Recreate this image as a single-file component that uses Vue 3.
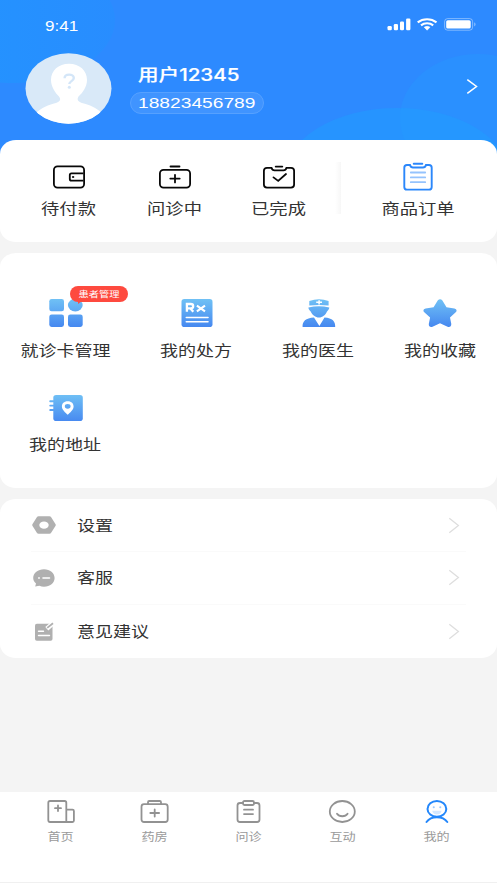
<script setup>
const orders = [
  { icon: 'wallet', label: '待付款' },
  { icon: 'kit', label: '问诊中' },
  { icon: 'done', label: '已完成' },
]
const services = [
  { icon: 'grid', label: '就诊卡管理', badge: '患者管理' },
  { icon: 'rx', label: '我的处方' },
  { icon: 'doctor', label: '我的医生' },
  { icon: 'star', label: '我的收藏' },
  { icon: 'address', label: '我的地址' },
]
const settings = [
  { icon: 'nut', label: '设置' },
  { icon: 'chat', label: '客服' },
  { icon: 'note', label: '意见建议' },
]
const tabs = [
  { icon: 'home', label: '首页' },
  { icon: 'pharmacy', label: '药房' },
  { icon: 'consult', label: '问诊' },
  { icon: 'smile', label: '互动' },
  { icon: 'me', label: '我的' },
]
</script>

<template>
  <div class="page">
    <svg class="defs" width="0" height="0">
      <defs>
        <linearGradient id="blue" gradientUnits="userSpaceOnUse" x1="0" y1="0" x2="0" y2="28">
          <stop offset="0" stop-color="#70c1f5" />
          <stop offset="1" stop-color="#4688f0" />
        </linearGradient>
        <linearGradient id="glow" x1="0" y1="0" x2="1" y2="0">
          <stop offset="0" stop-color="#2295ff" />
          <stop offset="1" stop-color="#288dff" />
        </linearGradient>
      </defs>
    </svg>

    <header class="header">
      <svg class="bubbles" width="497" height="160" viewBox="0 0 497 160">
        <ellipse cx="14" cy="20" rx="101" ry="63" fill="url(#glow)" />
        <ellipse cx="478" cy="118" rx="78" ry="64" fill="#2a90ff" />
        <ellipse cx="397" cy="178" rx="113" ry="70" fill="#1fa0ff" fill-opacity=".45" />
      </svg>
      <div class="status">
        <span class="time">9:41</span>
        <svg class="signals" width="90" height="14" viewBox="0 0 90 14">
          <g fill="#fff">
            <rect x=".5" y="8" width="4.3" height="4.3" rx="1.2" />
            <rect x="6.8" y="6" width="4.2" height="6.3" rx="1.2" />
            <rect x="13" y="3.4" width="4" height="8.9" rx="1.2" />
            <rect x="19.1" y=".6" width="4.3" height="11.7" rx="1.2" />
            <path d="M37.2 9.2Q40.1 7.4 43 9.2L40.1 12.2Z" stroke="#fff" stroke-width=".6" stroke-linejoin="round" />
          </g>
          <g fill="none" stroke="#fff" stroke-width="2.1">
            <path d="M30.7 4.4C36 .1 44.2 .1 49.5 4.4" />
            <path d="M34 7.4C37.3 4.6 42.9 4.6 46.2 7.4" />
          </g>
          <rect x="57.6" y=".6" width="28" height="11.6" rx="3" fill="none" stroke="#fff" stroke-opacity=".4" />
          <rect x="59.2" y="2.2" width="24.5" height="8.4" rx="1.6" fill="#fff" />
          <path d="M87.2 4.3q2.8 2.1 0 4.2z" fill="#fff" fill-opacity=".45" />
        </svg>
      </div>
      <div class="profile">
        <svg class="avatar" width="87" height="71" viewBox="0 0 87 71">
          <clipPath id="round"><ellipse cx="43.5" cy="35.5" rx="43" ry="35.3" /></clipPath>
          <g clip-path="url(#round)">
            <rect width="87" height="71" fill="#d9e9f8" />
            <path d="M44 10.7C33.500 10.700 26 17.500 26 27C26 34 30.500 40 34 43.500C36.500 47 35 49 29 50.500C20 53 14.500 56 9 62V71H79V62C73 56 68 53 59 50.500C53 49 51.500 47 53.500 43.500C57.500 40 62 34 62 27C62 17.500 54.500 10.700 44 10.700Z" fill="#fff" />
          </g>
          <path d="M39.600 25.200C39.600 20.400 48.800 20.600 48.800 25C48.800 28 44.300 28.200 44.300 31" fill="none" stroke="#d4e6f8" stroke-width="2.400" />
          <circle cx="44.300" cy="34.200" r="1.500" fill="#d4e6f8" />
        </svg>
        <div class="identity">
          <div class="name"><span>用户12345</span></div>
          <div class="phone"><span>18823456789</span></div>
        </div>
        <svg class="enter" width="12" height="17" viewBox="0 0 12 17">
          <path d="M1.300 1.600L10.500 8.500L1.300 15.400" fill="none" stroke="#fff" stroke-width="1.500" />
        </svg>
      </div>
    </header>

    <section class="card orders">
      <div v-for="o in orders" :key="o.label" class="order">
        <svg width="34" height="30" viewBox="0 0 34 30" fill="none" stroke="#080808" stroke-width="1.800" stroke-linecap="round">
          <template v-if="o.icon === 'wallet'">
            <rect x="1.900" y="4.400" width="30.200" height="21.200" rx="3.600" />
            <path d="M31.500 11.400H19.500Q17.800 11.400 17.800 13V17Q17.800 18.700 19.500 18.700H31.500" stroke-linecap="butt" />
            <circle cx="21" cy="15" r=".7" fill="#080808" stroke-width=".8" />
          </template>
          <template v-else-if="o.icon === 'kit'">
            <path d="M12.500 4.500H21.500" />
            <rect x="1.900" y="7.900" width="30.200" height="17.800" rx="3.600" />
            <path d="M12.300 16.600H21.700M17 12.800V20.400" />
          </template>
          <template v-else>
            <path d="M13.700 4.600H20.300" />
            <path d="M9.500 5.800H5Q1.900 5.800 1.900 8.800V22.600Q1.900 25.600 5 25.600H29Q32.100 25.600 32.100 22.600V8.800Q32.100 5.800 29 5.800H24.500Q23.800 8.400 21.500 8.400H12.500Q10.200 8.400 9.500 5.800Z" />
            <path d="M11.500 15.400L16.200 18.900L24 12" />
          </template>
        </svg>
        <span class="label">{{ o.label }}</span>
      </div>
      <i class="split"></i>
      <div class="order">
        <svg width="34" height="30" viewBox="0 0 34 30" fill="none" stroke="#2b87fb" stroke-width="1.900" stroke-linecap="round">
          <path d="M12.700 1.700H21.300" />
          <path d="M9 3H6Q3.300 3 3.300 5.700V24.900Q3.300 27.600 6 27.600H28Q30.700 27.600 30.700 24.900V5.700Q30.700 3 28 3H25Q24.300 5.500 22 5.500H12Q9.700 5.500 9 3Z" />
          <path d="M9.800 10.500H24.200M9.800 15.400H24.200M9.800 20.200H24.200" stroke="#95c3fd" stroke-width="1.800" />
        </svg>
        <span class="label">商品订单</span>
      </div>
    </section>

    <section class="card services">
      <div v-for="s in services" :key="s.label" class="service">
        <div class="glyph">
          <svg width="34" height="28" viewBox="0 0 34 28" fill="url(#blue)">
            <template v-if="s.icon === 'grid'">
              <rect x=".3" y="0" width="14.700" height="12.300" rx="2.300" />
              <ellipse cx="26.300" cy="6.100" rx="7.400" ry="6.300" />
              <rect x=".3" y="15.500" width="14.700" height="12.400" rx="2.300" />
              <rect x="19" y="15.500" width="14.700" height="12.400" rx="2.300" />
            </template>
            <template v-else-if="s.icon === 'rx'">
              <rect x="1.500" y="0" width="31" height="28" rx="2.800" />
              <g fill="none" stroke="#fff">
                <path d="M6.900 12.700V5H10.700C14 5 14 9.300 10.700 9.300H7M10.200 9.300L13.300 12.700" stroke-width="2.300" />
                <path d="M16.900 6.600L25 12.400M25 6.600L16.900 12.400" stroke-width="2.100" />
                <path d="M6.300 18.500H28M6.300 22.700H28" stroke-width="1.600" stroke-linecap="round" />
              </g>
            </template>
            <template v-else-if="s.icon === 'doctor'">
              <path d="M7.300 2Q17-1.600 26.600 2V6.600Q17 5.200 7.300 6.600Z" />
              <path d="M6.400 8.600Q17 5.700 27.300 8.600C27.300 10 26.300 11.500 25 12.500C23.500 16 20.500 18.500 17 18.500S10.300 16 8.700 12.500C7.300 11.500 6.400 10 6.400 8.600Z" />
              <path d="M.6 28C.2 22.500 3.600 18.900 12 18.500L17.400 27L22.500 18.500C30.500 18.900 33.500 22.500 33.200 28Z" />
              <path d="M14.200 3.300H20M17.100 1.200V5.400" stroke="#fff" stroke-width="1.500" />
            </template>
            <path v-else-if="s.icon === 'star'" d="M14.700 1.400Q17.200-1.100 19.400 1.400L23.500 8.200L31.400 9.500Q35 10.500 32.700 13.300L27 18.600L28.300 25Q28.200 28.600 24.600 27.700L17 24.200L9.500 27.700Q5.700 28.600 5.800 25L7.100 18.600L1.300 13.300Q-1 10.500 2.600 9.500L10.600 8.200Z" />
            <template v-else>
              <rect x="4.300" y="1" width="29.500" height="26" rx="2.800" />
              <rect x=".3" y="6.300" width="5" height="1.900" rx=".8" />
              <rect x=".3" y="10.700" width="5" height="1.900" rx=".8" />
              <rect x=".3" y="15.100" width="5" height="1.900" rx=".8" />
              <path fill="#fff" fill-rule="evenodd" d="M18.700 7.300C14.800 7.300 12.900 9.700 12.900 12.500C12.900 15.700 16.600 18.900 18.700 20.700C20.900 18.900 24.600 15.700 24.600 12.500C24.600 9.700 22.700 7.300 18.700 7.300ZM18.700 9.900A2.900 2.400 0 1 1 18.700 14.700A2.900 2.400 0 1 1 18.700 9.900Z" />
            </template>
          </svg>
          <div v-if="s.badge" class="badge"><span>{{ s.badge }}</span></div>
        </div>
        <span class="label">{{ s.label }}</span>
      </div>
    </section>

    <section class="card settings">
      <div v-for="s in settings" :key="s.label" class="row">
        <svg width="26" height="20" viewBox="0 0 26 20" fill="#b0b0b0">
          <path v-if="s.icon === 'nut'" fill-rule="evenodd" d="M7.500 1.200H18.500Q19.500 1.200 20 2L24.600 9.200Q25 10 24.600 10.800L20 18Q19.500 18.800 18.500 18.800H7.500Q6.500 18.800 6 18L1.400 10.800Q1 10 1.400 9.200L6 2Q6.500 1.200 7.500 1.200ZM13 6.500A4.700 3.600 0 1 0 13 13.700A4.700 3.600 0 1 0 13 6.500Z" />
          <template v-else-if="s.icon === 'chat'">
            <path d="M13 1.200C19 1.200 23.600 5 23.600 10S19 18.700 13 18.700Q10.500 18.700 8.400 17.800L4.200 18.500L5 15.500C3.200 14 2.200 12 2.200 10C2.200 5 7 1.200 13 1.200Z" />
            <path d="M7.700 10H8.300M12 10H18.500" stroke="#fff" stroke-width="1.600" stroke-linecap="round" />
          </template>
          <template v-else>
            <rect x="4" y="1.800" width="17.500" height="17" rx="1.800" />
            <path d="M22.300 1L15.800 6.700" stroke="#fff" stroke-width="4.600" />
            <path d="M22 1.200L16.200 5.900" stroke="#b0b0b0" stroke-width="1.800" />
            <path d="M7.500 9.200H12.500M7.500 13.500H18.500" stroke="#fff" stroke-width="1.400" stroke-linecap="round" />
          </template>
        </svg>
        <span class="label">{{ s.label }}</span>
        <svg class="more" width="12" height="17" viewBox="0 0 12 17">
          <path d="M1.300 1.300L10.400 8.500L1.300 15.700" fill="none" stroke="#dedede" stroke-width="1.300" />
        </svg>
      </div>
    </section>

    <nav class="tabs">
      <div v-for="t in tabs" :key="t.label" class="tab">
        <svg width="30" height="24" viewBox="0 0 30 24" fill="none" stroke="#929292" stroke-width="1.800" stroke-linecap="round" stroke-linejoin="round">
          <template v-if="t.icon === 'home'">
            <path d="M20.300 22H4Q2.300 22 2.300 20.300V2.700Q2.300 1 4 1H18.600Q20.300 1 20.300 2.700V22H26.500Q27.900 22 27.900 20.600V11Q27.900 9.600 26.500 9.600H20.300" />
            <path d="M9 8.200H15M12 5.400V11" />
          </template>
          <template v-else-if="t.icon === 'pharmacy'">
            <rect x="1.500" y="4.200" width="26.200" height="17.800" rx="2.500" />
            <path d="M8 4.200V2.200Q8 1 9.200 1H19.800Q21 1 21 2.200V4.200M10.300 13H19.100M14.700 9.500V16.500" />
          </template>
          <template v-else-if="t.icon === 'consult'">
            <path d="M9 3H6Q3.500 3 3.500 5.500V19.500Q3.500 22 6 22H23Q25.500 22 25.500 19.500V5.500Q25.500 3 23 3H20" />
            <rect x="9" y="1" width="11" height="4" rx="1.500" />
            <path d="M10 9.700H19M10 14.100H19" />
          </template>
          <template v-else-if="t.icon === 'smile'">
            <ellipse cx="14.300" cy="11.500" rx="12.500" ry="10.500" />
            <path d="M9 13.700C11.300 17.100 17.300 17.100 19.600 13.700" />
          </template>
          <g v-else stroke="#2387fb" stroke-width="2">
            <ellipse cx="14.900" cy="8.900" rx="9.400" ry="7.900" />
            <path d="M4.500 22C9 15.500 20.800 15.500 25.300 22" />
            <path d="M11.700 7.200H11.800M18.200 7.200H18.300" stroke="#9fcbff" />
            <path d="M10.200 10.800H19.600Q19 14.500 14.900 14.500T10.200 10.800Z" fill="#d3e7ff" stroke="none" />
          </g>
        </svg>
        <span class="tab-label">{{ t.label }}</span>
      </div>
    </nav>
  </div>
</template>

<style>
body {
  margin: 0;
  background: #f4f4f4;
}
</style>

<style scoped>
.page {
  width: 497px;
  height: 883px;
  display: flex;
  flex-direction: column;
  overflow: hidden;
  background: #f4f4f4;
  color: #333;
  font-family: "Liberation Sans", "Noto Sans CJK SC", sans-serif;
}
.defs {
  position: absolute;
}
.header {
  position: relative;
  flex: none;
  height: 160px;
  margin-bottom: -20.500px;
  background: #2d8aff;
  color: #fff;
}
.bubbles {
  position: absolute;
  inset: 0;
}
.status {
  position: relative;
  display: flex;
  justify-content: space-between;
  align-items: flex-start;
  height: 34px;
  padding: 18px 20px 0 45px;
}
.time {
  margin-top: -1px;
  font-size: 15px;
  line-height: 17px;
  transform: scaleX(1.140);
  transform-origin: left;
}
.profile {
  position: relative;
  display: flex;
  align-items: flex-start;
  padding: 0 20px 0 25px;
}
.avatar {
  margin-top: .5px;
}
.identity {
  flex: 1;
  margin-left: 18px;
  padding-top: 11px;
}
.name {
  height: 24px;
  padding-left: 8px;
  line-height: 24px;
  font-size: 17px;
  font-weight: 500;
  font-family: Inter, "Noto Sans CJK SC", sans-serif;
  -webkit-text-stroke: .2px #fff;
}
.name span,
.phone span {
  display: inline-block;
  transform: scaleX(1.210);
  transform-origin: left;
}
.phone {
  box-sizing: border-box;
  width: 134px;
  height: 22px;
  margin-top: 4.500px;
  padding-left: 7px;
  border: 1px solid #56a1ff;
  border-radius: 11px;
  background: #4094ff;
  line-height: 19px;
  font-size: 15px;
}
.phone span {
  transform: scaleX(1.280);
}
.enter {
  margin-top: 26px;
  margin-right: -1px;
}
.card {
  position: relative;
  flex: none;
  box-sizing: border-box;
  border-radius: 16px / 14px;
  background: #fff;
}
.orders {
  display: grid;
  grid-template-columns: 106px 106px 101px 22px 134px;
  height: 102px;
  padding: 22px 12px 0 16px;
}
.order,
.service,
.tab {
  display: flex;
  flex-direction: column;
  align-items: center;
}
.label {
  font-size: 15px;
  line-height: 20px;
  white-space: nowrap;
  transform: scaleX(1.200);
}
.order .label {
  margin-top: 7.400px;
  transform: scaleX(1.220);
}
.split {
  width: 6px;
  height: 52px;
  margin-left: 6px;
  background: linear-gradient(90deg, #fff, #f7f7f7);
}
.services {
  display: grid;
  grid-template-columns: 131px 131px 113px 122px;
  grid-template-rows: 95px 95px;
  height: 235px;
  margin-top: 11.500px;
  padding-top: 46px;
}
.service:nth-child(4) {
  padding-left: 8px;
}
.service .label {
  margin-top: 14px;
}
.service:nth-child(5) .label {
  margin-top: 13px;
}
.glyph {
  position: relative;
  height: 28px;
}
.badge {
  position: absolute;
  left: 21.500px;
  top: -13px;
  width: 58px;
  height: 15.500px;
  border-radius: 8px;
  background: #fe4a3f;
  color: #fff;
  text-align: center;
  line-height: 16px;
  font-size: 8.500px;
}
.badge::after {
  content: "";
  position: absolute;
  left: 8px;
  top: 15px;
  border-top: 3px solid #fe4a3f;
  border-right: 4px solid transparent;
}
.badge span {
  display: block;
  white-space: nowrap;
  transform: scaleX(1.200);
}
.settings {
  height: 158.500px;
  margin-top: 11px;
}
.row {
  display: flex;
  align-items: center;
  box-sizing: border-box;
  height: 53px;
  margin: 0 31px;
  border-bottom: 1px solid #fafafa;
}
.row:nth-child(2) {
  padding-bottom: 1px;
}
.row:last-child {
  height: 53.500px;
  border: 0;
}
.row .label {
  flex: 1;
  margin-top: 1px;
  margin-left: 20px;
  transform-origin: left;
}
.row .more {
  margin-right: 6px;
}
.tabs {
  display: grid;
  grid-template-columns: repeat(5, 94px);
  box-sizing: border-box;
  height: 91.500px;
  margin-top: auto;
  padding: 8px 13px 0 14px;
  border-bottom: 1.500px solid #f0f0f0;
  background: #fff;
}
.tab-label {
  margin-top: 5px;
  font-size: 11px;
  line-height: 16px;
  color: #9a9a9a;
  transform: translateX(-.5px) scaleX(1.190);
}
</style>
